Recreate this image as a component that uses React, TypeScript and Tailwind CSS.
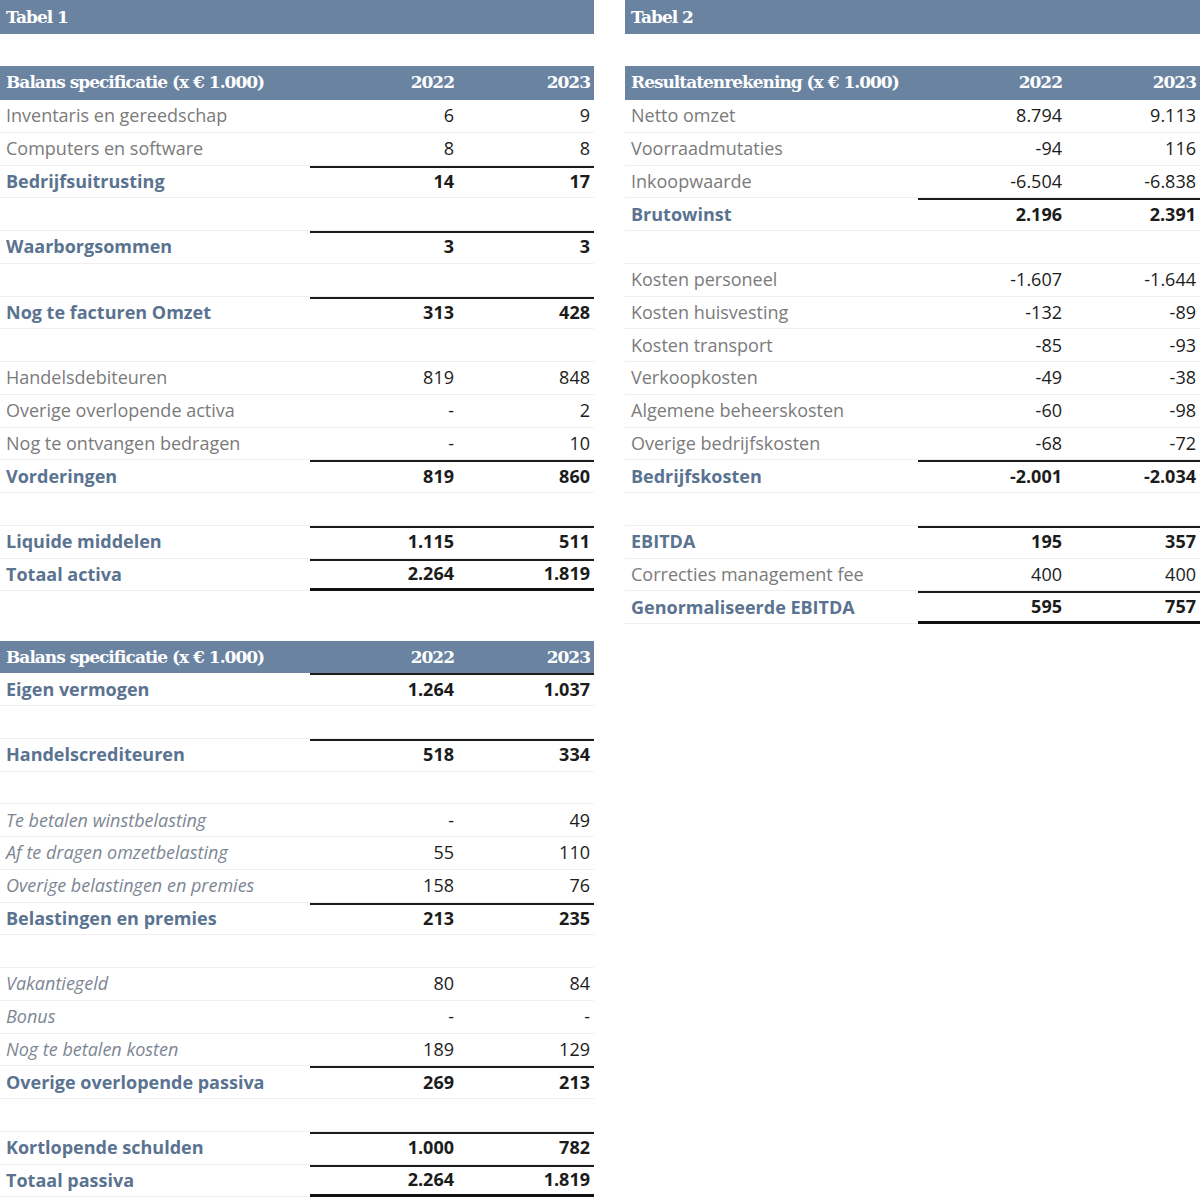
import React from "react";

type Row = {
  label?: string;
  a?: string;
  b?: string;
  kind?: "normal" | "bold" | "italic";
  top?: boolean;
  bottom?: boolean;
};

const balansActiva: Row[] = [
  { label: "Inventaris en gereedschap", a: "6", b: "9" },
  { label: "Computers en software", a: "8", b: "8" },
  { label: "Bedrijfsuitrusting", a: "14", b: "17", kind: "bold", top: true },
  {},
  { label: "Waarborgsommen", a: "3", b: "3", kind: "bold", top: true },
  {},
  { label: "Nog te facturen Omzet", a: "313", b: "428", kind: "bold", top: true },
  {},
  { label: "Handelsdebiteuren", a: "819", b: "848" },
  { label: "Overige overlopende activa", a: "-", b: "2" },
  { label: "Nog te ontvangen bedragen", a: "-", b: "10" },
  { label: "Vorderingen", a: "819", b: "860", kind: "bold", top: true },
  {},
  { label: "Liquide middelen", a: "1.115", b: "511", kind: "bold", top: true },
  { label: "Totaal activa", a: "2.264", b: "1.819", kind: "bold", top: true, bottom: true },
];

const balansPassiva: Row[] = [
  { label: "Eigen vermogen", a: "1.264", b: "1.037", kind: "bold", top: true },
  {},
  { label: "Handelscrediteuren", a: "518", b: "334", kind: "bold", top: true },
  {},
  { label: "Te betalen winstbelasting", a: "-", b: "49", kind: "italic" },
  { label: "Af te dragen omzetbelasting", a: "55", b: "110", kind: "italic" },
  { label: "Overige belastingen en premies", a: "158", b: "76", kind: "italic" },
  { label: "Belastingen en premies", a: "213", b: "235", kind: "bold", top: true },
  {},
  { label: "Vakantiegeld", a: "80", b: "84", kind: "italic" },
  { label: "Bonus", a: "-", b: "-", kind: "italic" },
  { label: "Nog te betalen kosten", a: "189", b: "129", kind: "italic" },
  { label: "Overige overlopende passiva", a: "269", b: "213", kind: "bold", top: true },
  {},
  { label: "Kortlopende schulden", a: "1.000", b: "782", kind: "bold", top: true },
  { label: "Totaal passiva", a: "2.264", b: "1.819", kind: "bold", top: true, bottom: true },
];

const resultaten: Row[] = [
  { label: "Netto omzet", a: "8.794", b: "9.113" },
  { label: "Voorraadmutaties", a: "-94", b: "116" },
  { label: "Inkoopwaarde", a: "-6.504", b: "-6.838" },
  { label: "Brutowinst", a: "2.196", b: "2.391", kind: "bold", top: true },
  {},
  { label: "Kosten personeel", a: "-1.607", b: "-1.644" },
  { label: "Kosten huisvesting", a: "-132", b: "-89" },
  { label: "Kosten transport", a: "-85", b: "-93" },
  { label: "Verkoopkosten", a: "-49", b: "-38" },
  { label: "Algemene beheerskosten", a: "-60", b: "-98" },
  { label: "Overige bedrijfskosten", a: "-68", b: "-72" },
  { label: "Bedrijfskosten", a: "-2.001", b: "-2.034", kind: "bold", top: true },
  {},
  { label: "EBITDA", a: "195", b: "357", kind: "bold", top: true },
  { label: "Correcties management fee", a: "400", b: "400" },
  { label: "Genormaliseerde EBITDA", a: "595", b: "757", kind: "bold", top: true, bottom: true },
];

// serif for the blue header bars
const serif = { fontFamily: "'DejaVu Serif', 'Liberation Serif', serif" };

function FinTable({
  title,
  rows,
  labelW,
  colA,
  colB,
  headH,
}: {
  title: string;
  rows: Row[];
  labelW: string;
  colA: string;
  colB: string;
  headH: string;
}) {
  return (
    <div className="flex flex-col">
      <div
        className={`flex ${headH} items-center bg-[#6a83a1] text-white font-bold text-[17px] tracking-[-1px]`}
        style={serif}
      >
        <div className={`${labelW} pl-[6px] whitespace-nowrap`}>{title}</div>
        <div className={`${colA} text-right pr-[4px]`}>2022</div>
        <div className={`${colB} text-right pr-[4px]`}>2023</div>
      </div>
      {rows.map((r, i) => {
        const bold = r.kind === "bold";
        const italic = r.kind === "italic";
        const numCls = [
          "flex items-center justify-end pr-[4px] text-[#1c1c1c] h-full",
          bold ? "font-bold" : "",
          r.top ? "shadow-[inset_0_2px_0_#1c1c1c]" : "",
          r.bottom ? "border-b-[3px] border-[#111]" : "border-b border-[#efefef]",
        ].join(" ");
        return (
          <div key={i} className="flex h-[32.75px]">
            <div
              className={[
                labelW,
                "flex items-center pl-[6px] whitespace-nowrap h-full border-b border-[#efefef]",
                bold ? "font-bold text-[#5a7391]" : "",
                italic ? "italic text-[#7d8694]" : "",
                !bold && !italic ? "text-[#7b7b7b]" : "",
              ].join(" ")}
            >
              {r.label}
            </div>
            <div className={`${colA} ${numCls}`}>{r.a}</div>
            <div className={`${colB} ${numCls}`}>{r.b}</div>
          </div>
        );
      })}
    </div>
  );
}

function TitleBar({ text }: { text: string }) {
  return (
    <div className="h-[34px] bg-[#6a83a1] flex items-center pl-[6px] pt-[1px]">
      <span className="text-white font-bold text-[17px] tracking-[-1px]" style={serif}>
        {text}
      </span>
    </div>
  );
}

export default function App() {
  return (
    <div
      className="w-[1200px] h-[1198px] overflow-hidden bg-white flex text-[18px]"
      style={{ fontFamily: "'Open Sans', 'Noto Sans', sans-serif" }}
    >
      <div className="w-[594px] shrink-0">
        <TitleBar text="Tabel 1" />
        <div className="mt-[32px]">
          <FinTable
            title="Balans specificatie (x € 1.000)"
            rows={balansActiva}
            labelW="w-[310px]"
            colA="w-[148px]"
            colB="w-[136px]"
            headH="h-[34px]"
          />
        </div>
        <div className="mt-[50px]">
          <FinTable
            title="Balans specificatie (x € 1.000)"
            rows={balansPassiva}
            labelW="w-[310px]"
            colA="w-[148px]"
            colB="w-[136px]"
            headH="h-[32px]"
          />
        </div>
      </div>
      <div className="w-[575px] shrink-0 ml-[31px]">
        <TitleBar text="Tabel 2" />
        <div className="mt-[32px]">
          <FinTable
            title="Resultatenrekening (x € 1.000)"
            rows={resultaten}
            labelW="w-[293px]"
            colA="w-[148px]"
            colB="w-[134px]"
            headH="h-[34px]"
          />
        </div>
      </div>
    </div>
  );
}
